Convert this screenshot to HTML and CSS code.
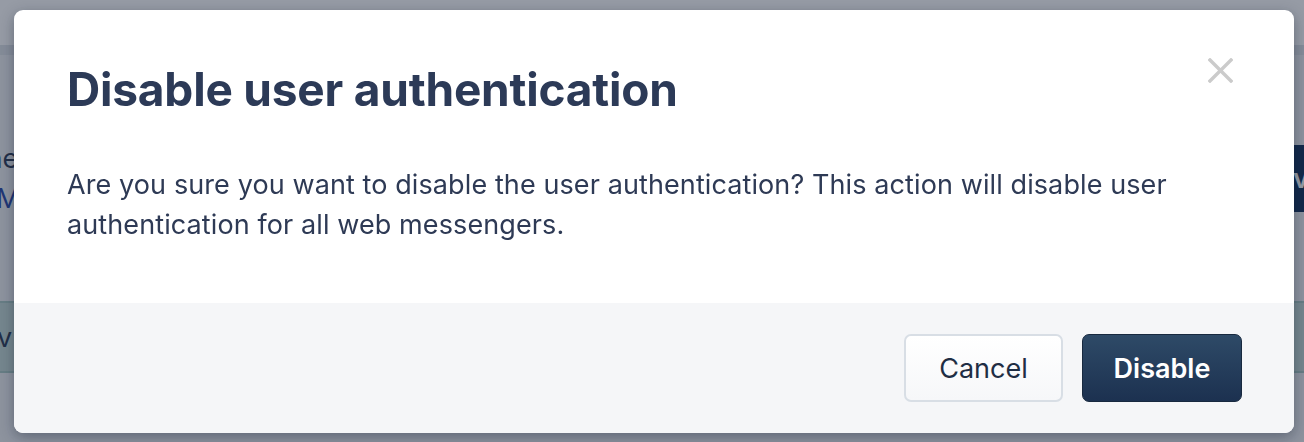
FILE: index.html
```html
<!DOCTYPE html>
<html lang="en">
<head>
<meta charset="utf-8">
<title>Disable user authentication</title>
<link rel="stylesheet" href="styles.css">
</head>
<body>
<div class="page">
  <header class="topbar"></header>
  <div class="subbar"></div>
  <main class="content">
    <div class="setting">
      <div class="setting-text">
        <p class="setting-desc">The user authentication is enabled for this messenger</p>
        <a class="setting-link" href="#">Messenger settings</a>
      </div>
      <button class="page-btn">Preview</button>
    </div>
    <div class="table-row">
      <span class="cell">v</span>
    </div>
  </main>
</div>
<div class="overlay"></div>
<div class="modal" role="dialog" aria-labelledby="modal-title">
  <div class="modal-main">
    <h1 class="modal-title" id="modal-title">Disable user authentication</h1>
    <button class="modal-close" aria-label="Close">
      <svg width="25" height="25" viewBox="0 0 25 25"><path d="M2 2L23 23M23 2L2 23" stroke="#cbcbcb" stroke-width="3.4" stroke-linecap="square" fill="none"/></svg>
    </button>
    <p class="modal-text">Are you sure you want to disable the user authentication? This action will disable user authentication for all web messengers.</p>
  </div>
  <div class="modal-footer">
    <button class="btn btn-secondary">Cancel</button>
    <button class="btn btn-primary">Disable</button>
  </div>
</div>
</body>
</html>
```

FILE: styles.css
```css
* { box-sizing: border-box; }
html, body { margin: 0; padding: 0; }
body {
  width: 1304px;
  height: 442px;
  overflow: hidden;
  font-family: Inter, "Noto Sans", "Liberation Sans", sans-serif;
  background: #eef0f3;
}
.page { width: 1304px; height: 442px; display: flex; flex-direction: column; }
.topbar { height: 45px; background: #ffffff; flex: none; }
.subbar { height: 10px; background: #dfe3e8; flex: none; }
.content { flex: 1; display: flex; flex-direction: column; }
.setting {
  margin-top: 90px;
  height: 67px;
  display: flex;
  align-items: center;
  justify-content: space-between;
}
.setting-text {
  margin-left: -31px;
  font-size: 27px;
  line-height: 40px;
  white-space: nowrap;
  overflow: hidden;
  width: 600px;
}
.setting-desc { margin: 0; color: #2c3a56; }
.setting-link { display: block; margin-left: 27px; color: #2948a8; text-decoration: none; }
.page-btn {
  flex: none;
  height: 67px;
  width: 120px;
  margin-right: -60px;
  border: 0;
  border-radius: 6px 0 0 6px;
  background: #12305a;
  color: #fff;
  font: 600 27px Inter, sans-serif;
  text-align: left;
  white-space: nowrap;
  padding-left: 6px;
}
.table-row {
  margin-top: 89px;
  height: 72px;
  background: #c3d9d5;
  border-top: 2px solid #a9c9c4;
  border-bottom: 2px solid #a9c9c4;
  display: flex;
  align-items: center;
}
.cell { font-size: 27px; color: #2c3a56; margin-left: -3px; }

.overlay {
  position: fixed;
  inset: 0;
  background: rgba(23, 33, 56, 0.45);
}
.modal {
  position: fixed;
  left: 14px;
  top: 10px;
  width: 1280px;
  height: 423px;
  background: #ffffff;
  border-radius: 9px;
  overflow: hidden;
  display: flex;
  flex-direction: column;
  box-shadow: 0 4px 14px rgba(10, 20, 40, 0.35);
}
.modal-main {
  position: relative;
  flex: 1;
  padding: 52px 53px 0 53px;
}
.modal-title {
  margin: 0;
  font-size: 46px;
  line-height: 54px;
  font-weight: 700;
  color: #2c3a57;
  letter-spacing: -0.2px;
}
.modal-close {
  position: absolute;
  top: 48px;
  right: 61px;
  width: 25px;
  height: 25px;
  padding: 0;
  border: 0;
  background: none;
  display: flex;
}
.modal-text {
  margin: 49px 0 0 0;
  font-size: 27px;
  line-height: 40px;
  letter-spacing: 0.1px;
  color: #2e3a55;
}
.modal-footer {
  flex: none;
  height: 130px;
  background: #f5f6f8;
  display: flex;
  justify-content: flex-end;
  align-items: center;
  gap: 19px;
  padding: 0 52px 0 0;
}
.btn {
  height: 68px;
  border-radius: 7px;
  font-family: Inter, "Noto Sans", sans-serif;
  font-size: 27px;
}
.btn-secondary {
  width: 159px;
  background: linear-gradient(#ffffff, #f6f7f9);
  border: 2px solid #d8dee5;
  color: #1f2e44;
}
.btn-primary {
  width: 160px;
  background: linear-gradient(#2e4a67, #1c3150);
  border: 1px solid #18293f;
  color: #ffffff;
  font-weight: 600;
}
```
